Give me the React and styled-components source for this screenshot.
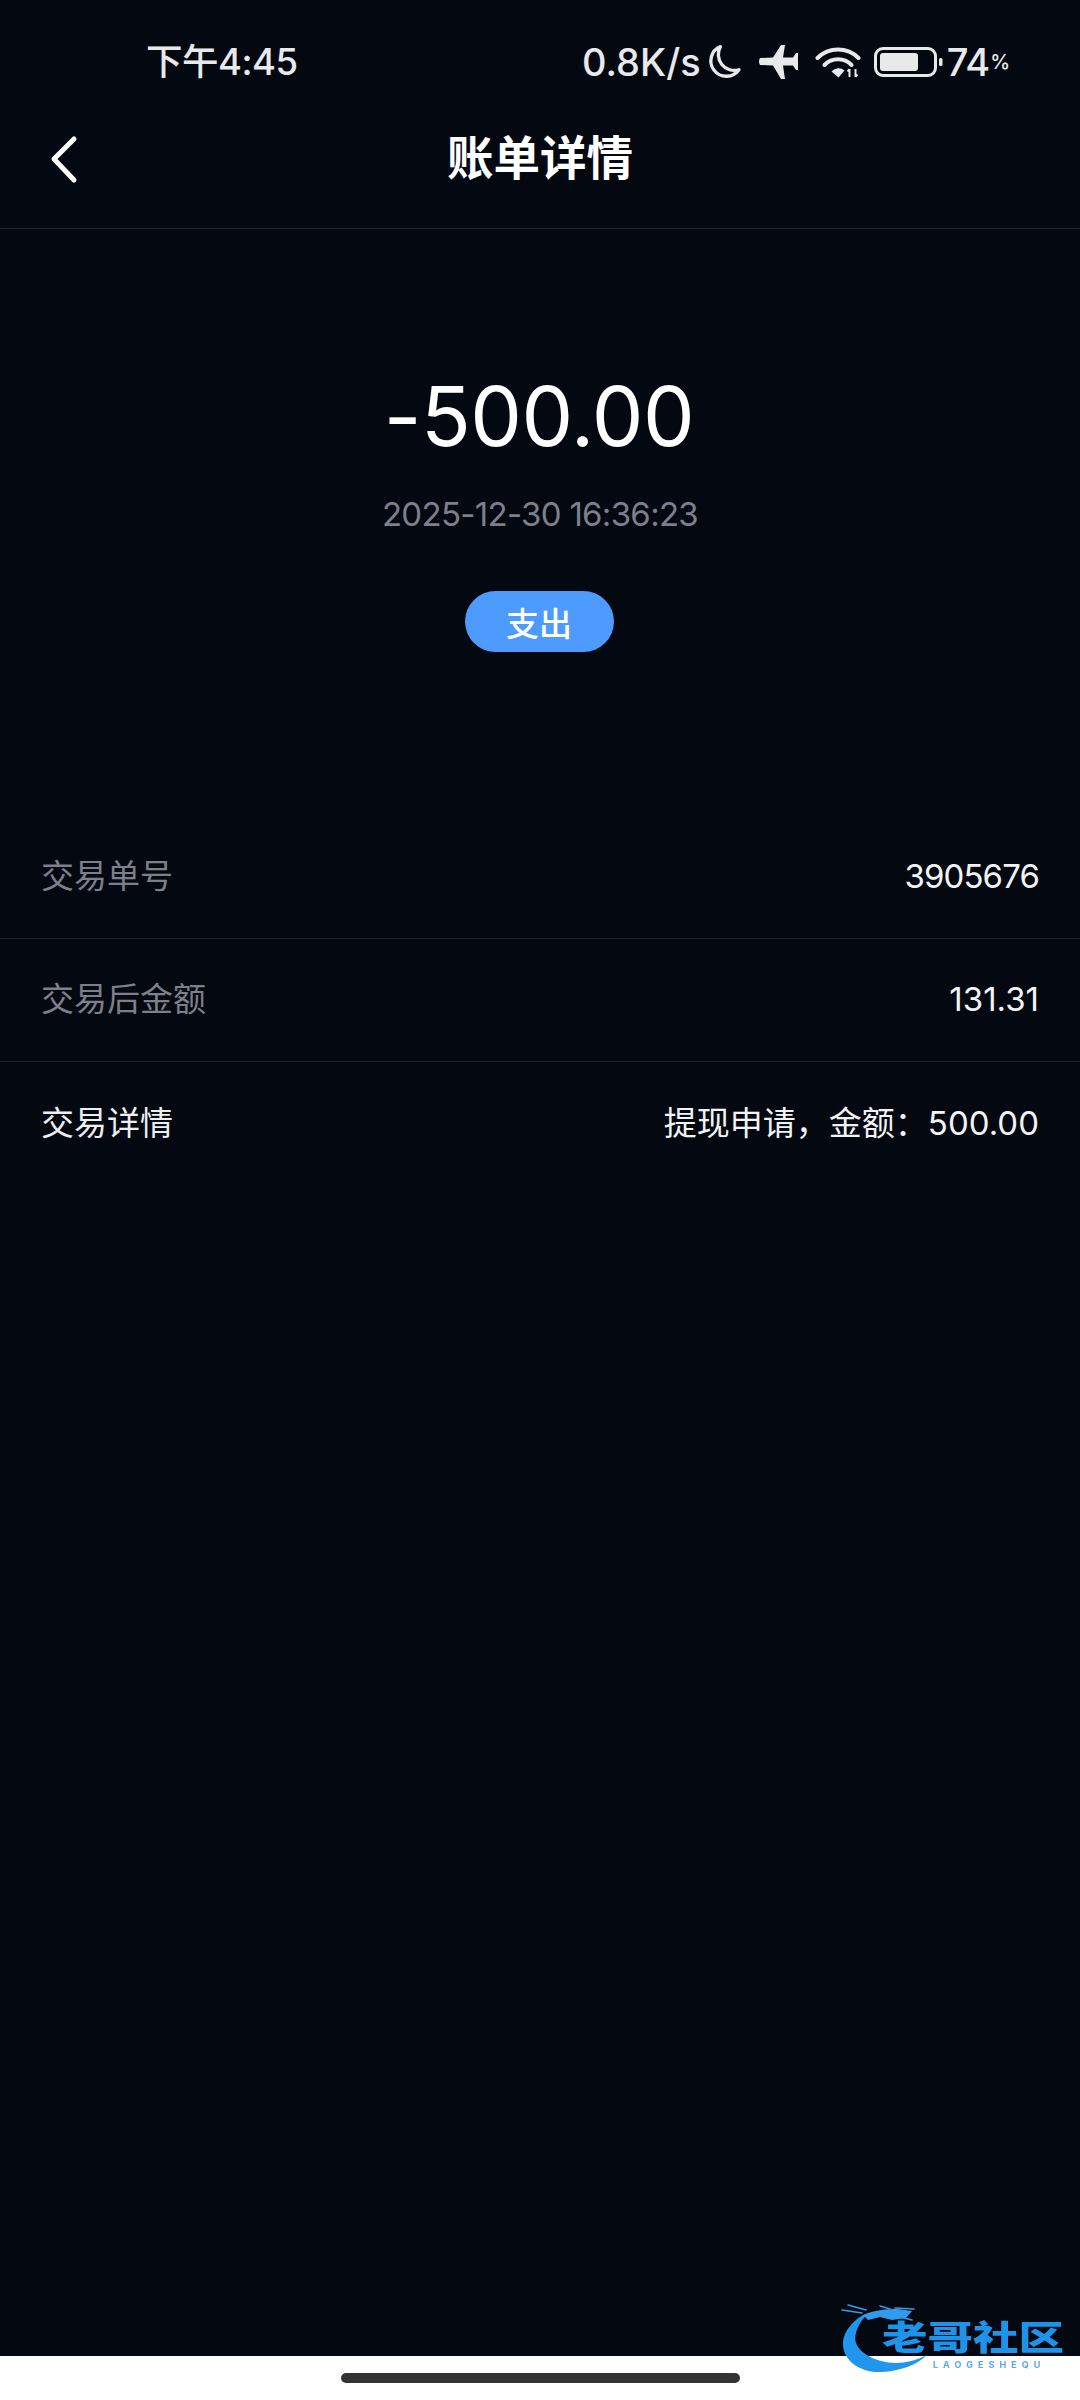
import React from 'react'
import styled, { createGlobalStyle } from 'styled-components'

const GlobalStyle = createGlobalStyle`
  html, body {
    margin: 0;
    padding: 0;
    background: #040810;
  }
  body {
    font-family: Inter, "Noto Sans CJK SC", sans-serif;
  }
`

const Page = styled.div`
  position: relative;
  width: 1080px;
  height: 2400px;
  display: flex;
  flex-direction: column;
  overflow: hidden;
  background: #040810;
  color: #fff;
`

const StatusBar = styled.div`
  height: 121px;
  box-sizing: border-box;
  padding: 39px 70px 0 146px;
  display: flex;
  justify-content: space-between;
  align-items: flex-start;
  color: #e8e9eb;
`

const Clock = styled.span`
  font-size: 36.5px;
  line-height: 46px;
  font-weight: 500;
  letter-spacing: -0.5px;
`

const StatusRight = styled.div`
  display: flex;
  align-items: center;
  height: 46px;
`

const Speed = styled.span`
  font-size: 38px;
  line-height: 46px;
  font-weight: 500;
  margin-right: 4px;
`

const StatusIcon = styled.svg`
  display: block;
  flex: none;
  margin-right: ${({ $gap }) => $gap}px;
`

const Level = styled.span`
  font-size: 38px;
  line-height: 46px;
  font-weight: 500;
  letter-spacing: -1px;
`

const Percent = styled.span`
  font-size: 20px;
  font-weight: 500;
  margin-left: 1px;
`

const NavBar = styled.header`
  height: 108px;
  box-sizing: border-box;
  border-bottom: 1px solid #262933;
  display: flex;
  align-items: flex-start;
  justify-content: center;
  position: relative;
`

const BackIcon = styled.svg`
  position: absolute;
  left: 48px;
  top: 13px;
`

const Title = styled.h1`
  margin: 6px 0 0;
  font-size: 46.5px;
  line-height: 62px;
  font-weight: 700;
  color: #fff;
`

const Summary = styled.section`
  height: 587px;
  box-sizing: border-box;
  padding-top: 138px;
  display: flex;
  flex-direction: column;
  align-items: center;
`

const Amount = styled.div`
  margin-right: 2px;
  font-size: 82px;
  line-height: 100px;
  font-weight: 400;
  letter-spacing: -0.5px;
  color: #fff;
`

const DateText = styled.div`
  margin-top: 26px;
  font-size: 33px;
  line-height: 42px;
  letter-spacing: -0.7px;
  color: #7d7f8a;
`

const Pill = styled.span`
  margin: 56px 2px 0 0;
  width: 149px;
  height: 61px;
  border-radius: 31px;
  background: #4d9bff;
  color: #fff;
  font-size: 33px;
  font-weight: 500;
  display: flex;
  align-items: center;
  justify-content: center;
`

const Row = styled.div`
  height: 123px;
  box-sizing: border-box;
  padding: 0 41px 2px;
  display: flex;
  align-items: center;
  justify-content: space-between;
  border-bottom: ${({ $last }) => ($last ? 'none' : '1px solid #1d2029')};
`

const Label = styled.span`
  font-size: 33px;
  line-height: 40px;
  color: ${({ $bright }) => ($bright ? '#eceef0' : '#7d7f8a')};
`

const Value = styled.span`
  font-size: 33px;
  line-height: 40px;
  letter-spacing: ${({ $tight }) => ($tight ? '-0.9px' : '0')};
  color: #f2f3f5;
`

const Spacer = styled.div`
  flex: 1;
`

const HomeBar = styled.div`
  height: 44px;
  background: #fff;
  display: flex;
  justify-content: center;
  padding-top: 17px;
  box-sizing: border-box;
`

const HomeHandle = styled.div`
  width: 399px;
  height: 10px;
  border-radius: 5px;
  background: #333;
`

const Watermark = styled.div`
  position: absolute;
  left: 840px;
  top: 2300px;
  width: 240px;
  height: 80px;
  filter: blur(0.5px);
`

const WatermarkArt = styled.svg`
  position: absolute;
  left: 0;
  top: 0;
`

const WatermarkName = styled.span`
  position: absolute;
  left: 42px;
  top: 24px;
  font-size: 45.5px;
  line-height: 36px;
  font-weight: 900;
  color: #1f93ea;
  white-space: nowrap;
  transform: scaleY(0.75);
  transform-origin: left top;
`

const WatermarkSub = styled.span`
  position: absolute;
  left: 93px;
  top: 60px;
  font-size: 9px;
  line-height: 10px;
  font-weight: 700;
  letter-spacing: 5px;
  color: #5aa9e6;
  white-space: nowrap;
`

const rows = [
  { label: '交易单号', value: '3905676', tight: true },
  { label: '交易后金额', value: '131.31' },
  { label: '交易详情', value: '提现申请，金额：500.00', bright: true, last: true },
]

const App = () => {
  return (
    <Page>
      <GlobalStyle />
      <StatusBar>
        <Clock>下午4:45</Clock>
        <StatusRight>
          <Speed>0.8K/s</Speed>
          <StatusIcon $gap={16} width="37" height="36" viewBox="0 0 34 35" fill="none">
            <path d="M14 2.5A15 15 0 1 0 32 25A15.5 15.5 0 0 1 14 2.5Z" stroke="#e8e9eb" strokeWidth="3.2" strokeLinejoin="round" />
          </StatusIcon>
          <StatusIcon $gap={17} width="40" height="36" viewBox="0 0 40 36">
            <path d="M2 14L15 13.5L23 1H27L25 13.5H35L38 9H40V26H38L35 21.5H25L27 35H23L15 21.5L2 21Q0 17.5 2 14Z" fill="#e8e9eb" />
          </StatusIcon>
          <StatusIcon $gap={13} width="46" height="32" viewBox="0 0 45 32" fill="none">
            <path d="M2 12A29 29 0 0 1 43 12" stroke="#e8e9eb" strokeWidth="4" strokeLinecap="round" />
            <path d="M9 19A19 19 0 0 1 36 19" stroke="#e8e9eb" strokeWidth="4" strokeLinecap="round" />
            <path d="M16 25.5A9 9 0 0 1 29 24.5L23 31.5Z" fill="#e8e9eb" />
            <path d="M34 31V23M40 31V23M32 25.5L34 23M42 28.5L40 31" stroke="#e8e9eb" strokeWidth="2" />
          </StatusIcon>
          <StatusIcon $gap={4} width="69" height="30" viewBox="0 0 69 30" fill="none">
            <rect x="1.5" y="1.5" width="60" height="27" rx="7.5" stroke="#e8e9eb" strokeWidth="3" />
            <rect x="6" y="6" width="38" height="18" rx="3" fill="#e8e9eb" />
            <rect x="65" y="11" width="3.5" height="8" rx="1.5" fill="#e8e9eb" />
          </StatusIcon>
          <Level>74</Level>
          <Percent>%</Percent>
        </StatusRight>
      </StatusBar>

      <NavBar>
        <BackIcon width="32" height="50" viewBox="0 0 32 50" fill="none">
          <path d="M26 5L6 25L26 46" stroke="#fff" strokeWidth="5" strokeLinecap="round" strokeLinejoin="round" />
        </BackIcon>
        <Title>账单详情</Title>
      </NavBar>

      <Summary>
        <Amount>-500.00</Amount>
        <DateText>2025-12-30 16:36:23</DateText>
        <Pill>支出</Pill>
      </Summary>

      {rows.map((row) => (
        <Row key={row.label} $last={row.last}>
          <Label $bright={row.bright}>{row.label}</Label>
          <Value $tight={row.tight}>{row.value}</Value>
        </Row>
      ))}

      <Spacer />
      <HomeBar>
        <HomeHandle />
      </HomeBar>

      <Watermark>
        <WatermarkArt width="240" height="80" viewBox="0 0 240 80" fill="none">
          <path d="M23 15C8 24 2 36 3 46C5 64 24 73 42 72C60 71 77 65 87 55C72 63 55 65 41 61C24 56 12 46 16 33C18 26 21 20 28 14Z" fill="#2196ee" />
          <path d="M23 15C34 10 46 9 58 9L72 11L66 18L52 20L40 17L28 20Z" fill="#2f9bec" />
          <path d="M2 10L22 13M8 5L26 10M55 8L74 9M60 17L72 20M40 6L50 9" stroke="#2f9bec" strokeWidth="1.6" strokeLinecap="round" />
        </WatermarkArt>
        <WatermarkName>老哥社区</WatermarkName>
        <WatermarkSub>LAOGESHEQU</WatermarkSub>
      </Watermark>
    </Page>
  )
}

export default App
